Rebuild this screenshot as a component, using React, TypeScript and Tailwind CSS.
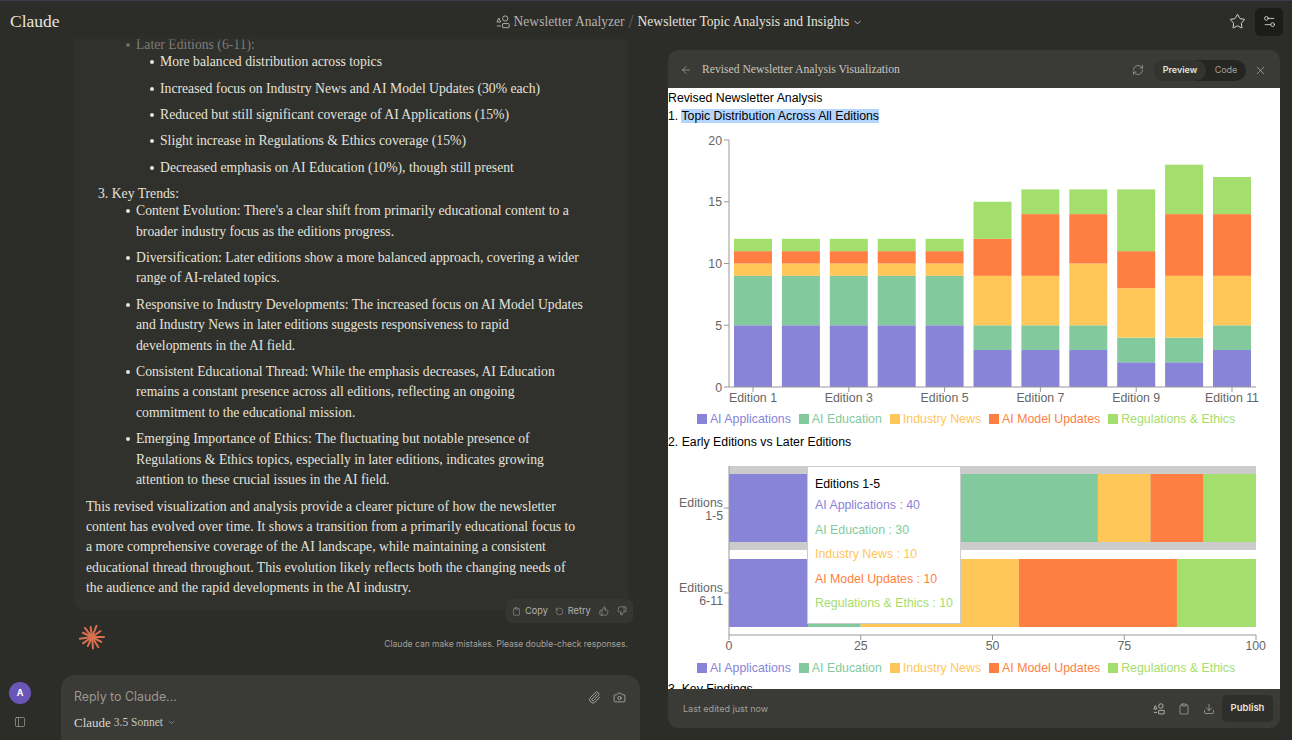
import { ArrowLeft, Camera, ChevronDown, Clipboard, Download, Paperclip, PanelLeft, RefreshCw, RotateCcw, Settings2, Star, ThumbsDown, ThumbsUp, X } from "lucide-react";

const C = ["#8884d8", "#82ca9d", "#ffc658", "#ff7f42", "#a4de6c"];
const NAMES = ["AI Applications", "AI Education", "Industry News", "AI Model Updates", "Regulations & Ethics"];
const EARLY = [5, 4, 1, 1, 1];
const STACKS = [EARLY, EARLY, EARLY, EARLY, EARLY, [3, 2, 4, 3, 3], [3, 2, 4, 5, 2], [3, 2, 5, 4, 2], [2, 2, 4, 3, 5], [2, 2, 5, 5, 4], [3, 2, 4, 5, 3]];
const AXIS = "#999";
const TICK = "#666";

function ProjectIcon({ size = 14 }: { size?: number }) {
  return (
    <svg width={size} height={size} viewBox="0 0 16 16" fill="none" stroke="currentColor" strokeWidth="1.1" className="shrink-0">
      <path d="M1 8 3.2 3.5 5.4 8Z" />
      <circle cx="10.5" cy="4" r="3" />
      <rect x="7.5" y="9.8" width="7.5" height="4.7" rx="0.6" />
      <path d="M1 12.5h4.5" />
    </svg>
  );
}

function Spark() {
  const rays = [
    [0, 12], [28, 10.5], [58, 12], [85, 11.5], [115, 10], [145, 11], [172, 12.5], [205, 10], [232, 11.5], [262, 10], [292, 12], [325, 10.5],
  ];
  return (
    <svg width="26" height="26" viewBox="-13 -13 26 26" className="shrink-0">
      {rays.map(([a, l], i) => (
        <line key={i} x1="0" y1="0" x2={l * Math.cos((a * Math.PI) / 180)} y2={l * Math.sin((a * Math.PI) / 180)} stroke="#d9714f" strokeWidth="2" strokeLinecap="round" />
      ))}
    </svg>
  );
}

function Legend() {
  return (
    <div className="flex h-[18px] items-center justify-center gap-[8px] pr-[16px] text-[12.35px]">
      {NAMES.map((n, i) => (
        <div key={n} className="flex items-center gap-[3px]" style={{ color: C[i] }}>
          <span className="h-[10px] w-[10px]" style={{ background: C[i] }} />
          <span>{n}</span>
        </div>
      ))}
    </div>
  );
}

function StackChart() {
  const X0 = 61;
  const Y0 = 263;
  const U = 12.35;
  return (
    <svg width="612" height="284" className="block" fontFamily="Liberation Sans" fontSize="12.35">
      {STACKS.map((s, i) => {
        let acc = 0;
        return s.map((v, j) => {
          const y = Y0 - (acc + v) * U;
          acc += v;
          return <rect key={`${i}-${j}`} x={X0 + 5 + i * 47.9} y={y} width={38} height={v * U} fill={C[j]} />;
        });
      })}
      <path d={`M${X0} 16V${Y0}H588`} fill="none" stroke={AXIS} />
      {[0, 5, 10, 15, 20].map((v) => (
        <g key={v}>
          <line x1={X0 - 5} x2={X0} y1={Y0 - v * U} y2={Y0 - v * U} stroke={AXIS} />
          <text x={X0 - 7} y={Y0 - v * U + 4.5} textAnchor="end" fill={TICK}>{v}</text>
        </g>
      ))}
      {[1, 3, 5, 7, 9, 11].map((v) => {
        const x = X0 + 24 + (v - 1) * 47.9;
        return (
          <g key={v}>
            <line x1={x} x2={x} y1={Y0} y2={Y0 + 5} stroke={AXIS} />
            <text x={x} y={Y0 + 15} textAnchor="middle" fill={TICK}>{`Edition ${v}`}</text>
          </g>
        );
      })}
    </svg>
  );
}

function BarRow({ y, values }: { y: number; values: number[] }) {
  let acc = 0;
  return (
    <>
      {values.map((v, i) => {
        const x = 61 + acc * 5.27;
        acc += v;
        return <rect key={i} x={x} y={y} width={v * 5.27} height={68} fill={C[i]} />;
      })}
    </>
  );
}

function CompareChart() {
  return (
    <svg width="612" height="209" className="block" fontFamily="Liberation Sans" fontSize="12.35">
      <rect x="61" y="16" width="527" height="84" fill="#ccc" />
      <BarRow y={24} values={[40, 30, 10, 10, 10]} />
      <BarRow y={109} values={[15, 10, 30, 30, 15]} />
      <path d="M61 16V185H588" fill="none" stroke={AXIS} />
      <line x1="56" x2="61" y1="58" y2="58" stroke={AXIS} />
      <line x1="56" x2="61" y1="143" y2="143" stroke={AXIS} />
      <text textAnchor="end" fill={TICK}>
        <tspan x="55" y="57">Editions</tspan>
        <tspan x="55" y="70">1-5</tspan>
      </text>
      <text textAnchor="end" fill={TICK}>
        <tspan x="55" y="142">Editions</tspan>
        <tspan x="55" y="155">6-11</tspan>
      </text>
      {[0, 25, 50, 75, 100].map((v) => {
        const x = 61 + v * 5.27;
        return (
          <g key={v}>
            <line x1={x} x2={x} y1="185" y2="190" stroke={AXIS} />
            <text x={v === 100 ? 588 : x} y="200" textAnchor={v === 100 ? "end" : "middle"} dx={v === 100 ? 10 : 0} fill={TICK}>{v}</text>
          </g>
        );
      })}
    </svg>
  );
}

function Tooltip() {
  const vals = [40, 30, 10, 10, 10];
  return (
    <div className="absolute left-[139px] top-[16px] h-[158px] w-[154px] border border-[#ccc] bg-white pl-[7px] pt-[9px] text-[12.35px]">
      <div className="mb-[1px] h-[16px] leading-[16px] text-black">Editions 1-5</div>
      {NAMES.map((n, i) => (
        <div key={n} className="h-[24.5px] leading-[24.5px] whitespace-nowrap" style={{ color: C[i] }}>{`${n} : ${vals[i]}`}</div>
      ))}
    </div>
  );
}

function SubItem({ children }: { children: string }) {
  return (
    <li className="relative mb-[6.2px] whitespace-nowrap before:absolute before:left-[-10px] before:top-[8px] before:h-[4px] before:w-[4px] before:rounded-full before:bg-[#e5e3da]">{children}</li>
  );
}

function Trend({ lines }: { lines: string[] }) {
  return (
    <li className="relative mb-[6.5px] whitespace-nowrap before:absolute before:left-[-10px] before:top-[8px] before:h-[4px] before:w-[4px] before:rounded-full before:bg-[#e5e3da]">
      {lines.map((l) => (
        <div key={l}>{l}</div>
      ))}
    </li>
  );
}

export default function App() {
  return (
    <div className="relative flex h-[740px] w-[1292px] overflow-hidden border-t border-[#403b52] bg-[#2c2c29] font-['Liberation_Serif',serif] text-[#e5e3da]">
      <header className="absolute inset-x-0 top-0 z-10 flex h-[41px] items-center bg-gradient-to-b from-[#2c2c29] from-85% to-transparent pl-[10px] pr-[9px]">
        <div className="text-[17.5px] text-[#e8e6dd]">Claude</div>
        <div className="ml-[436px] flex items-center pt-[1px] text-[13.55px] text-[#b5b3aa]">
          <ProjectIcon />
          <span className="ml-[4px]">Newsletter Analyzer</span>
          <span className="mx-[4px] text-[18px] font-thin text-[#66645e]">/</span>
          <span className="text-[#e5e3da]">Newsletter Topic Analysis and Insights</span>
          <ChevronDown size={11} className="ml-[3px] text-[#c8c6bd]" />
        </div>
        <div className="ml-auto flex items-center gap-[9px]">
          <Star size={17} strokeWidth={1.3} className="text-[#e5e3da]" />
          <div className="flex h-[28px] w-[28px] items-center justify-center rounded-[5px] bg-[#1c1c1a]">
            <Settings2 size={15} strokeWidth={1.3} className="text-[#e5e3da]" />
          </div>
        </div>
      </header>

      <aside className="flex w-[61px] shrink-0 flex-col items-start justify-end pb-[12px] pl-[9px]">
        <div className="flex h-[22px] w-[22px] items-center justify-center rounded-full bg-[#6a56b8] font-['Inter',sans-serif] text-[9px] font-bold text-white">A</div>
        <PanelLeft size={12} strokeWidth={1.2} className="ml-[5px] mt-[12px] text-[#b5b3aa]" />
      </aside>

      <main className="flex w-[579px] shrink-0 flex-col">
        <div className="relative flex-1 overflow-hidden pt-[34px]">
          <article className="mx-[12px] h-[576px] rounded-b-[14px] bg-[#30302d] text-[13.7px] leading-[20.2px]">
            <ul className="ml-[63px]">
              <li className="relative whitespace-nowrap text-[#7d7c75] before:absolute before:left-[-10px] before:top-[8px] before:h-[4px] before:w-[4px] before:rounded-full before:bg-[#6d6c66]">
                Later Editions (6-11):
                <ul className="-mt-[3px] ml-[24px] text-[#e5e3da]">
                  <SubItem>More balanced distribution across topics</SubItem>
                  <SubItem>Increased focus on Industry News and AI Model Updates (30% each)</SubItem>
                  <SubItem>Reduced but still significant coverage of AI Applications (15%)</SubItem>
                  <SubItem>Slight increase in Regulations &amp; Ethics coverage (15%)</SubItem>
                  <SubItem>Decreased emphasis on AI Education (10%), though still present</SubItem>
                </ul>
              </li>
            </ul>
            <div className="ml-[25px]">3. Key Trends:</div>
            <ul className="-mt-[3px] ml-[63px]">
              <Trend lines={["Content Evolution: There's a clear shift from primarily educational content to a", "broader industry focus as the editions progress."]} />
              <Trend lines={["Diversification: Later editions show a more balanced approach, covering a wider", "range of AI-related topics."]} />
              <Trend lines={["Responsive to Industry Developments: The increased focus on AI Model Updates", "and Industry News in later editions suggests responsiveness to rapid", "developments in the AI field."]} />
              <Trend lines={["Consistent Educational Thread: While the emphasis decreases, AI Education", "remains a constant presence across all editions, reflecting an ongoing", "commitment to the educational mission."]} />
              <Trend lines={["Emerging Importance of Ethics: The fluctuating but notable presence of", "Regulations & Ethics topics, especially in later editions, indicates growing", "attention to these crucial issues in the AI field."]} />
            </ul>
            <p className="ml-[13px] mt-[7px] whitespace-nowrap">
              This revised visualization and analysis provide a clearer picture of how the newsletter<br />
              content has evolved over time. It shows a transition from a primarily educational focus to<br />
              a more comprehensive coverage of the AI landscape, while maintaining a consistent<br />
              educational thread throughout. This evolution likely reflects both the changing needs of<br />
              the audience and the rapid developments in the AI industry.
            </p>
          </article>
          <div className="absolute left-[445px] top-[598px] flex h-[24px] items-center gap-[4px] rounded-[6px] bg-[#353532] px-[6px] font-['Inter',sans-serif] text-[9.2px] text-[#b5b3aa]">
            <Clipboard size={9} strokeWidth={1.2} />
            <span>Copy</span>
            <RotateCcw size={9} strokeWidth={1.2} className="ml-[3px]" />
            <span>Retry</span>
            <ThumbsUp size={10} strokeWidth={1.2} className="ml-[4px]" />
            <ThumbsDown size={10} strokeWidth={1.2} className="ml-[4px]" />
          </div>
          <div className="mt-[13px] flex items-start justify-between pl-[18px] pr-[12px]">
            <Spark />
            <span className="mt-[14px] font-['Inter',sans-serif] text-[8.5px] text-[#a3a198]">Claude can make mistakes. Please double-check responses.</span>
          </div>
        </div>
        <div className="flex h-[65px] shrink-0 flex-col rounded-t-[14px] bg-[#3a3a37] pl-[13px] pr-[14px] pt-[13px]">
          <div className="flex items-center justify-between">
            <span className="font-['Inter',sans-serif] text-[12.4px] text-[#9a9890]">Reply to Claude...</span>
            <div className="flex items-center gap-[12px] text-[#c8c6bd]">
              <Paperclip size={13} strokeWidth={1.3} />
              <Camera size={13} strokeWidth={1.3} />
            </div>
          </div>
          <div className="mt-[6px] flex items-center text-[13px] text-[#d8d6cd]">
            Claude <span className="ml-[3px] text-[11.5px] text-[#c8c6bd]">3.5 Sonnet</span>
            <ChevronDown size={9} className="ml-[4px] text-[#9a9890]" />
          </div>
        </div>
      </main>

      <section className="mb-[12px] ml-[28px] mt-[49px] flex w-[612px] shrink-0 flex-col overflow-hidden rounded-[10px] bg-[#3a3a37]">
        <div className="flex h-[38px] shrink-0 items-center pl-[12px] pr-[13px] pt-[2px] text-[#b5b3aa]">
          <ArrowLeft size={12} strokeWidth={1.3} />
          <span className="ml-[10px] text-[11.65px] text-[#c8c6bd]">Revised Newsletter Analysis Visualization</span>
          <RefreshCw size={12} strokeWidth={1.3} className="ml-auto" />
          <div className="ml-[10px] flex h-[21px] items-center rounded-full bg-[#252523] font-['Inter',sans-serif] text-[9px]">
            <span className="flex h-[21px] w-[52px] items-center justify-center rounded-full bg-[#33332f] font-semibold text-[#e5e3da]">Preview</span>
            <span className="flex w-[40px] items-center justify-center text-[#a3a198]">Code</span>
          </div>
          <X size={13} strokeWidth={1.3} className="ml-[8px]" />
        </div>
        <div className="relative h-[601px] shrink-0 overflow-hidden bg-white pt-[1px] font-['Liberation_Sans',sans-serif] text-[12.3px] leading-[18px] text-black">
          <div>Revised Newsletter Analysis</div>
          <div>1. <span className="bg-[#b4d5fe]">Topic Distribution Across All Editions</span></div>
          <div className="-mt-[1px]"><StackChart /></div>
          <div className="mt-[2px]"><Legend /></div>
          <div className="mt-[5px]">2. Early Editions vs Later Editions</div>
          <div className="relative -mt-[1px]">
            <CompareChart />
            <Tooltip />
          </div>
          <Legend />
          <div className="mt-[3px]">3. Key Findings</div>
        </div>
        <div className="flex flex-1 items-center pl-[15px] pr-[7px] font-['Inter',sans-serif] text-[9px] text-[#a3a198]">
          <span>Last edited just now</span>
          <div className="ml-auto flex items-center gap-[13px] text-[#c8c6bd]">
            <ProjectIcon size={12} />
            <Clipboard size={12} strokeWidth={1.2} />
            <Download size={12} strokeWidth={1.2} />
          </div>
          <div className="ml-[7px] flex h-[27px] w-[51px] items-center justify-center rounded-[5px] bg-[#2e2e2b] text-[9.5px] font-semibold text-[#e5e3da]">Publish</div>
        </div>
      </section>
    </div>
  );
}
